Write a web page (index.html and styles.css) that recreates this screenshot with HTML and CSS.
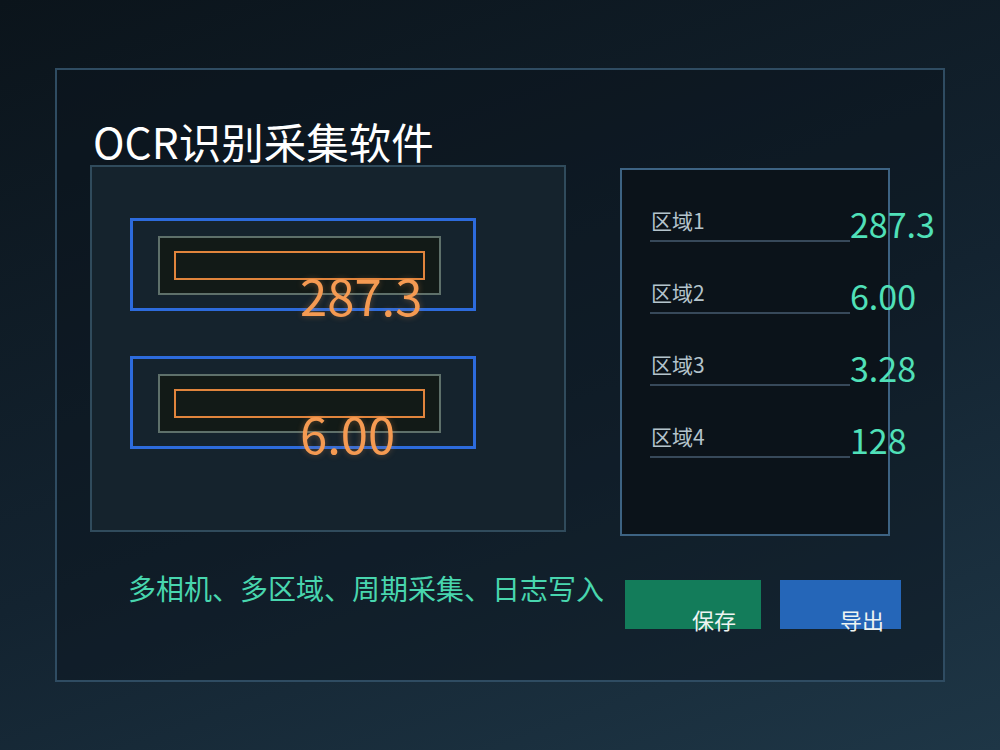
FILE: index.html
```html
<!DOCTYPE html>
<html lang="zh-CN">
<head>
<meta charset="utf-8">
<title>OCR识别采集软件</title>
<link rel="stylesheet" href="styles.css">
</head>
<body>
<div class="frame">
  <h1 class="title">OCR识别采集软件</h1>
  <div class="main">
    <div class="preview">
      <div class="cam">
        <div class="screen"><div class="roi"></div></div>
        <span class="reading">287.3</span>
      </div>
      <div class="cam">
        <div class="screen"><div class="roi"></div></div>
        <span class="reading">6.00</span>
      </div>
    </div>
    <div class="results">
      <div class="row"><span class="label">区域1</span><span class="value">287.3</span></div>
      <div class="row"><span class="label">区域2</span><span class="value">6.00</span></div>
      <div class="row"><span class="label">区域3</span><span class="value">3.28</span></div>
      <div class="row"><span class="label">区域4</span><span class="value">128</span></div>
    </div>
  </div>
  <div class="footer">
    <p class="features">多相机、多区域、周期采集、日志写入</p>
    <div class="btn btn-save">保存</div>
    <div class="btn btn-export">导出</div>
  </div>
</div>
</body>
</html>
```
FILE: styles.css
```css
* { box-sizing: border-box; }
html, body {
  margin: 0;
  width: 1000px;
  height: 750px;
}
body {
  background: linear-gradient(160deg, #0b141b 0%, #132330 55%, #1e3646 100%);
  font-family: "Noto Sans CJK SC", "Noto Sans", sans-serif;
  overflow: hidden;
  padding-top: 68px;
}
.frame {
  margin-left: 55px;
  width: 890px;
  height: 614px;
  border: 2px solid #2f4c62;
  background: rgba(10, 20, 28, 0.45);
  padding-top: 50px;
}
.title {
  margin: 0 0 3px 36px;
  font-size: 42.5px;
  line-height: 42px;
  font-weight: 400;
  color: #ffffff;
  height: 42px;
  white-space: nowrap;
}
.main {
  display: flex;
  align-items: flex-start;
  margin-left: 33px;
  gap: 54px;
}
.preview {
  flex-shrink: 0;
  width: 476px;
  height: 367px;
  border: 2px solid #304b5c;
  background: #15232d;
  padding: 51px 0 0 38px;
}
.cam {
  position: relative;
  width: 346px;
  height: 93px;
  border: 3px solid #2d6bdc;
  padding: 15px 0 0 25px;
  margin-bottom: 45px;
}
.screen {
  width: 283px;
  height: 59px;
  border: 2px solid #5e706a;
  background: #121a17;
  padding: 13px 0 0 14px;
}
.roi {
  width: 251px;
  height: 29px;
  border: 2px solid #e0843c;
}
.reading {
  position: absolute;
  left: 167px;
  top: 49px;
  font-size: 49px;
  line-height: 49px;
  color: #f59a52;
  text-shadow: 0 0 6px rgba(245, 154, 82, 0.35);
  white-space: nowrap;
}
.results {
  flex-shrink: 0;
  margin-top: 3px;
  width: 270px;
  height: 368px;
  border: 2px solid #3d6383;
  background: #0b131a;
  padding-left: 28px;
}
.row {
  display: flex;
  align-items: flex-end;
  height: 72px;
}
.label {
  flex-shrink: 0;
  width: 200px;
  padding: 0 0 9px 1px;
  border-bottom: 2px solid #37495a;
  font-size: 21px;
  line-height: 21px;
  color: #b4c4cc;
}
.value {
  flex-shrink: 0;
  font-size: 34px;
  line-height: 34px;
  color: #50e0b8;
  margin-bottom: 1px;
  white-space: nowrap;
}
.footer {
  display: flex;
  align-items: flex-start;
  margin-top: 44px;
  margin-left: 71px;
}
.features {
  flex-shrink: 0;
  margin: -6px 0 0 0;
  width: 497px;
  font-size: 28px;
  line-height: 28px;
  color: #48d6ae;
  white-space: nowrap;
}
.btn {
  flex-shrink: 0;
  height: 49px;
  padding-top: 28px;
  font-size: 22px;
  line-height: 22px;
  color: #eef4f2;
  white-space: nowrap;
}
.btn-save {
  width: 136px;
  background: #137c5a;
  padding-left: 67px;
}
.btn-export {
  width: 121px;
  margin-left: 19px;
  background: #2566b8;
  padding-left: 60px;
}
```
